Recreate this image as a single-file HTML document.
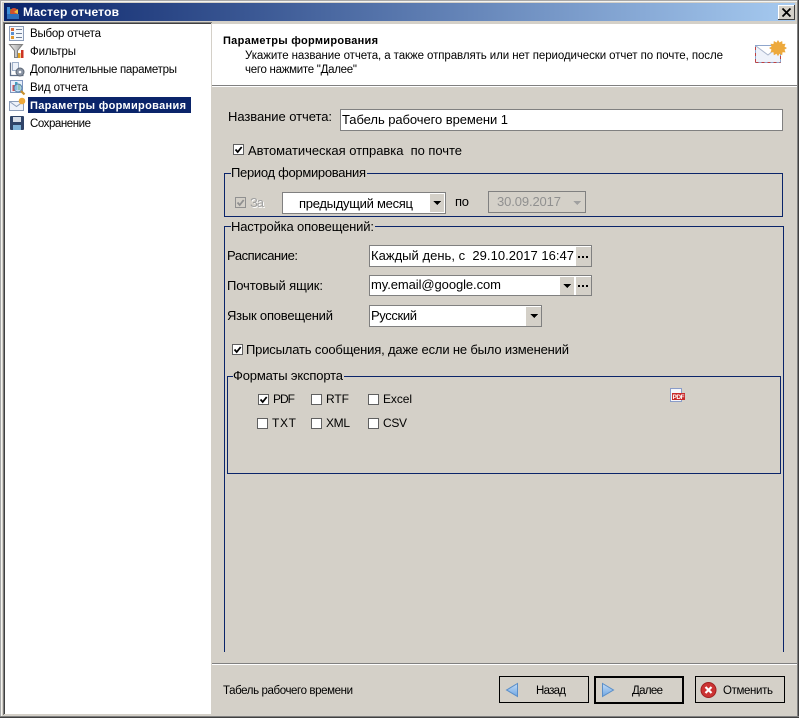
<!DOCTYPE html>
<html><head><meta charset="utf-8"><style>
html,body{margin:0;padding:0;width:799px;height:718px;overflow:hidden;background:#d4d0c8}
svg{display:block}
text{font-family:"Liberation Sans",sans-serif;font-size:11.5px;fill:#000;white-space:pre}
.f{font-size:13px}
.l{font-size:12px}
.b{font-weight:bold}
.bs{font-size:11px;font-weight:bold}
</style></head><body>
<svg width="799" height="718" viewBox="0 0 799 718" xmlns="http://www.w3.org/2000/svg" shape-rendering="crispEdges">
<defs>
<linearGradient id="tb"><stop offset="0" stop-color="#0a246a"/><stop offset="1" stop-color="#a6caf0"/></linearGradient>
<linearGradient id="ab" x1="0" y1="0" x2="0" y2="1"><stop offset="0" stop-color="#c4dcf6"/><stop offset="1" stop-color="#6ea6e2"/></linearGradient>
<linearGradient id="fn" x1="0" y1="0" x2="1" y2="0"><stop offset="0" stop-color="#f0f0f0"/><stop offset="1" stop-color="#9a9a9a"/></linearGradient>
</defs>
<!-- frame -->
<rect width="799" height="718" fill="#d4d0c8"/>
<rect x="0" y="0" width="799" height="1" fill="#a8a8a8"/>
<rect x="0" y="0" width="1" height="718" fill="#a8a8a8"/>
<rect x="1" y="1" width="797" height="1" fill="#f4f4f0"/>
<rect x="1" y="1" width="1" height="716" fill="#f4f4f0"/>
<rect x="797" y="0" width="1" height="718" fill="#808080"/>
<rect x="798" y="0" width="1" height="718" fill="#404040"/>
<rect x="0" y="716" width="799" height="1" fill="#808080"/>
<rect x="0" y="717" width="799" height="1" fill="#404040"/>
<!-- title -->
<rect x="4" y="3" width="791" height="18" fill="url(#tb)"/>
<text x="23" y="16" class="l b" style="fill:#fff" textLength="96">Мастер отчетов</text>
<g shape-rendering="auto">
<rect x="7" y="7" width="3" height="8" fill="#3c8fd8"/><rect x="10" y="9" width="4" height="8" fill="#3fa03f"/><circle cx="14" cy="12" r="4" fill="#d05030"/><path d="M7 14h12v5H7z" fill="#2e6fbb"/><path d="M14 12l4-3v5z" fill="#e8c040"/>
</g>
<rect x="778" y="5" width="17" height="15" fill="#d4d0c8"/>
<path d="M778 5h17v1h-16v14h-1z" fill="#fff"/>
<path d="M778 20h17v-15h-1v14h-16z" fill="#404040"/>
<g shape-rendering="auto"><path d="M782.500 8.500l8 8M790.500 8.500l-8 8" stroke="#000" stroke-width="1.800"/></g>

<!-- list panel -->
<rect x="3" y="22" width="209" height="693" fill="#fff"/>
<rect x="3" y="22" width="209" height="1" fill="#808080"/>
<rect x="3" y="23" width="209" height="1" fill="#404040"/>
<rect x="3" y="22" width="1" height="693" fill="#808080"/>
<rect x="4" y="23" width="1" height="692" fill="#404040"/>
<rect x="211" y="23" width="1" height="692" fill="#d4d0c8"/>
<rect x="4" y="714" width="208" height="1" fill="#d4d0c8"/>

<!-- list icons -->
<g shape-rendering="auto">
<rect x="9.500" y="26.500" width="14" height="14" fill="#f4f7fc" stroke="#8c9db8"/>
<rect x="11" y="28" width="3" height="3" fill="#d86a3a"/><rect x="11" y="32" width="3" height="3" fill="#5b8ed0"/><rect x="11" y="36" width="3" height="3" fill="#e0962e"/>
<path d="M16 29.500h6M16 33.500h6M16 37.500h6" stroke="#6f7f98" fill="none"/>
<path d="M9.500 44.500h13l-5 6v7h-3v-7z" fill="url(#fn)" stroke="#808080"/>
<rect x="18" y="53" width="2.500" height="5" fill="#e0a020"/><rect x="21" y="50" width="2.500" height="8" fill="#cc3322"/>
<path d="M10.500 62.500v13h13" fill="none" stroke="#5f6f88" stroke-width="1.300"/><path d="M12.500 62.500h6v8h-6z" fill="#eef3fa" stroke="#9fb0c8"/>
<circle cx="20" cy="72" r="4" fill="#8a94a4" stroke="#5e6876"/><circle cx="20" cy="72" r="1.300" fill="#fff"/>
<rect x="10.500" y="80.500" width="12" height="12" fill="#e6eefa" stroke="#7f96c0"/>
<rect x="12.500" y="85" width="2.500" height="6" fill="#d05050"/><rect x="15" y="82" width="2.500" height="8" fill="#3fa0c0"/><rect x="18" y="84" width="2.500" height="6" fill="#60a860"/>
<circle cx="18" cy="88" r="4" fill="rgba(180,215,245,.6)" stroke="#5580a8"/><path d="M21 91l3.500 3.500" stroke="#c8902c" stroke-width="2.200"/>
<path d="M9.500 101.500h14v9h-14z" fill="#eef2fa" stroke="#8c9db8"/><path d="M9.500 101.500l7 5 7-5" fill="none" stroke="#8c9db8"/>
<circle cx="22" cy="101" r="3.300" fill="#eea83a"/>
<rect x="10" y="116" width="14" height="14" rx="1" fill="#2f4468"/><rect x="13" y="117" width="8" height="5" fill="#d7dee8"/><rect x="13" y="125" width="8" height="5" fill="#7fb2d8"/>
</g>

<!-- list text -->
<text x="30" y="37" textLength="71">Выбор отчета</text>
<text x="30" y="55" textLength="46">Фильтры</text>
<text x="30" y="73" textLength="147">Дополнительные параметры</text>
<text x="30" y="91" textLength="58">Вид отчета</text>
<rect x="28" y="97" width="163" height="16" fill="#0a246a"/>
<text x="30" y="109" class="bs" style="fill:#fff" textLength="156">Параметры формирования</text>
<text x="30" y="127" textLength="61">Сохранение</text>

<!-- header -->
<rect x="212" y="24" width="585" height="61" fill="#fff"/>
<rect x="212" y="85" width="585" height="1" fill="#808080"/>
<rect x="212" y="86" width="585" height="1" fill="#fff"/>
<text x="223" y="44" class="bs" textLength="155">Параметры формирования</text>
<text x="245" y="59" textLength="478">Укажите название отчета, а также отправлять или нет периодически отчет по почте, после</text>
<text x="245" y="73" textLength="112">чего нажмите "Далее"</text>
<g shape-rendering="auto">
<path d="M755.500 45.500h25v17h-25z" fill="#eef2fa" stroke="#8fa6cc"/>
<path d="M755.500 62.500h25" stroke="#c04040" stroke-dasharray="3 3"/>
<path d="M755.500 47v15M780.500 50v12" stroke="#c04040" stroke-dasharray="3 3"/>
<path d="M756 46l12 9 11-9" fill="#fff" stroke="#aab6cc"/>
<path d="M778 40l1.500 2.500 2.700-1.500.3 3 3-.2-1 2.800 2.500 1.400-2.500 1.600 1 2.800-3-.2-.3 3-2.700-1.500-1.500 2.500-1.500-2.500-2.700 1.500-.3-3-3 .2 1-2.800-2.500-1.600 2.500-1.400-1-2.800 3 .2.300-3 2.700 1.500z" fill="#eda93c"/>
</g>

<!-- name -->
<text x="228" y="121" class="f" textLength="104">Название отчета:</text>
<rect x="340.500" y="109.500" width="442" height="21" fill="#fff" stroke="#808080"/>
<text x="342" y="124" class="f" textLength="166">Табель рабочего времени 1</text>

<!-- auto checkbox -->
<rect x="233.500" y="144.500" width="10" height="10" fill="#fff" stroke="#606060"/>
<g shape-rendering="auto"><path d="M235.500 149.500l2.200 2.500 4-5" fill="none" stroke="#000" stroke-width="1.800"/></g>
<text x="248" y="155" class="f" textLength="214">Автоматическая отправка  по почте</text>

<!-- Period group -->
<path d="M231 173.500h-6.500v43h558v-43H367" fill="none" stroke="#0a246a"/>
<text x="231" y="177" class="f" textLength="135">Период формирования</text>
<rect x="235.500" y="197.500" width="10" height="10" fill="#d4d0c8" stroke="#909090"/>
<g shape-rendering="auto"><path d="M237.500 202.500l2.200 2.500 4-5" fill="none" stroke="#909090" stroke-width="1.800"/></g>
<text x="251" y="208" class="f" style="fill:#fff" textLength="14">За</text>
<text x="250" y="207" class="f" style="fill:#a0a0a0" textLength="14">За</text>
<rect x="282.500" y="192.500" width="163" height="21" fill="#fff" stroke="#808080"/>
<rect x="430" y="194" width="14" height="18" fill="#d4d0c8"/>
<path d="M433 201h8l-4 4z" fill="#000"/>
<text x="299" y="208" class="f" textLength="114">предыдущий месяц</text>
<text x="455" y="206" class="f" textLength="14">по</text>
<rect x="488.500" y="191.500" width="97" height="21" fill="#d4d0c8" stroke="#808080"/>
<text x="497" y="206" class="f" style="fill:#909090" textLength="64">30.09.2017</text>
<path d="M573 201h8l-4 4z" fill="#a0a0a0"/>

<!-- Notifications group -->
<path d="M231 226.500h-6.500V652M783.500 652V226.500H375" fill="none" stroke="#0a246a"/>
<text x="231" y="231" class="f" textLength="143">Настройка оповещений:</text>

<text x="227" y="260" class="f" textLength="71">Расписание:</text>
<rect x="369.500" y="245.500" width="222" height="21" fill="#fff" stroke="#808080"/>
<rect x="576" y="247" width="15" height="19" fill="#d4d0c8"/>
<text x="371" y="260" class="f" textLength="203">Каждый день, с  29.10.2017 16:47</text>
<path d="M578 256h2v2h-2zM582 256h2v2h-2zM586 256h2v2h-2z" fill="#000"/>

<text x="227" y="290" class="f" textLength="96">Почтовый ящик:</text>
<rect x="369.500" y="275.500" width="222" height="20" fill="#fff" stroke="#808080"/>
<rect x="560" y="277" width="14" height="18" fill="#d4d0c8"/>
<rect x="576" y="277" width="15" height="18" fill="#d4d0c8"/>
<text x="371" y="289" class="f" textLength="130">my.email@google.com</text>
<path d="M563 284h8l-4 4z" fill="#000"/>
<path d="M578 285h2v2h-2zM582 285h2v2h-2zM586 285h2v2h-2z" fill="#000"/>

<text x="227" y="320" class="f" textLength="106">Язык оповещений</text>
<rect x="369.500" y="305.500" width="172" height="21" fill="#fff" stroke="#808080"/>
<rect x="526" y="307" width="15" height="19" fill="#d4d0c8"/>
<text x="371" y="320" class="f" textLength="46">Русский</text>
<path d="M530 314h8l-4 4z" fill="#000"/>

<rect x="232.500" y="344.500" width="10" height="10" fill="#fff" stroke="#606060"/>
<g shape-rendering="auto"><path d="M234.500 349.500l2.200 2.500 4-5" fill="none" stroke="#000" stroke-width="1.800"/></g>
<text x="246" y="354" class="f" textLength="323">Присылать сообщения, даже если не было изменений</text>

<!-- Formats group -->
<path d="M233 376.500h-5.500v97h553v-97H344" fill="none" stroke="#0a246a"/>
<text x="233" y="380" class="f" textLength="110">Форматы экспорта</text>

<rect x="258.500" y="394.500" width="10" height="10" fill="#fff" stroke="#606060"/>
<g shape-rendering="auto"><path d="M260.500 399.500l2.200 2.500 4-5" fill="none" stroke="#000" stroke-width="1.800"/></g>
<text x="273" y="403" class="l" textLength="22">PDF</text>
<rect x="311.500" y="394.500" width="10" height="10" fill="#fff" stroke="#606060"/>
<text x="326" y="403" class="l" textLength="23">RTF</text>
<rect x="368.500" y="394.500" width="10" height="10" fill="#fff" stroke="#606060"/>
<text x="383" y="403" class="l" textLength="29">Excel</text>
<rect x="257.500" y="418.500" width="10" height="10" fill="#fff" stroke="#606060"/>
<text x="272" y="427" class="l" textLength="24">TXT</text>
<rect x="311.500" y="418.500" width="10" height="10" fill="#fff" stroke="#606060"/>
<text x="326" y="427" class="l" textLength="24">XML</text>
<rect x="368.500" y="418.500" width="10" height="10" fill="#fff" stroke="#606060"/>
<text x="383" y="427" class="l" textLength="24">CSV</text>

<!-- pdf icon -->
<rect x="670.500" y="388.500" width="11" height="13" fill="#f4f6fc" stroke="#8a9cc8"/>
<rect x="672" y="393" width="13" height="7" fill="#c8282a"/>
<text x="672.500" y="399" style="font-size:6.500px;font-weight:bold;fill:#fff" textLength="12">PDF</text>

<!-- footer -->
<rect x="212" y="663" width="585" height="1" fill="#808080"/>
<rect x="212" y="664" width="585" height="1" fill="#fff"/>
<text x="223" y="694" textLength="130">Табель рабочего времени</text>

<rect x="499.500" y="676.500" width="89" height="26" fill="#d4d0c8" stroke="#000"/>
<g shape-rendering="auto"><path d="M517.500 683.500v13l-11-6.500z" fill="url(#ab)" stroke="#5a8ec8"/></g>
<text x="536" y="694" textLength="30">Назад</text>

<rect x="595" y="677" width="88" height="26" fill="#d4d0c8" stroke="#000" stroke-width="2"/>
<g shape-rendering="auto"><path d="M602.500 683.500v13l11-6.500z" fill="url(#ab)" stroke="#5a8ec8"/></g>
<text x="632" y="694" textLength="31">Далее</text>

<rect x="695.500" y="676.500" width="89" height="26" fill="#d4d0c8" stroke="#000"/>
<g shape-rendering="auto"><circle cx="708.500" cy="690" r="7.500" fill="#cc3333" stroke="#a02020"/><path d="M705.500 687l6 6M711.500 687l-6 6" stroke="#fff" stroke-width="2.200"/></g>
<text x="723" y="694" textLength="50">Отменить</text>
</svg>
</body></html>
